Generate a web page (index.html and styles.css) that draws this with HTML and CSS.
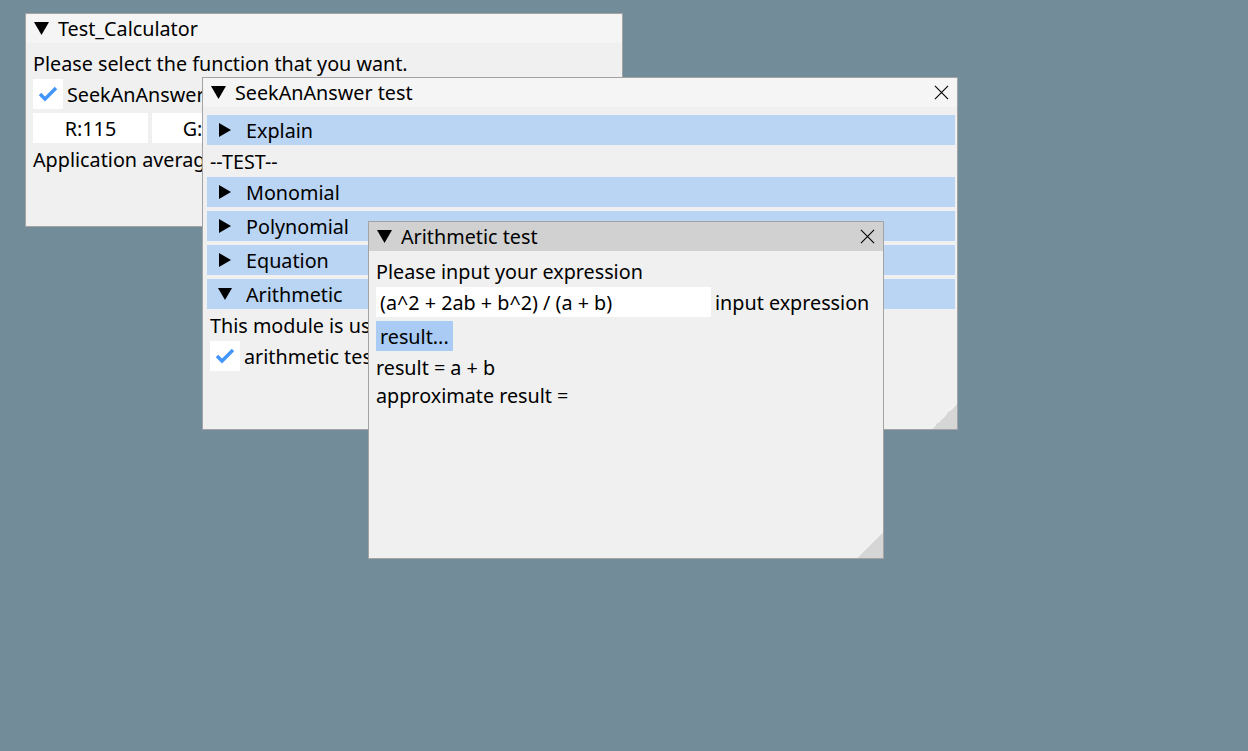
FILE: index.html
```html
<!DOCTYPE html>
<html>
<head>
<meta charset="utf-8">
<link rel="stylesheet" href="styles.css">
</head>
<body>
<div class="desk">

  <div class="win win1">
    <div class="title">
      <svg class="tri" viewBox="0 0 14 14"><polygon points="0,1 14,1 7,13" /></svg>
      <span>Test_Calculator</span>
    </div>
    <div class="content">
      <div class="line">Please select the function that you want.</div>
      <div class="check-row">
        <span class="box"><svg viewBox="0 0 30 30"><polyline points="7,15 12,20 23,9" /></svg></span>
        <span class="label">SeekAnAnswer test</span>
      </div>
      <div class="color-row">
        <span class="cfield">R:115</span>
        <span class="cfield">G:140</span>
        <span class="cfield">B:153</span>
        <span class="swatch"></span>
        <span class="label">clear color</span>
      </div>
      <div class="line">Application average 16.667 ms/frame (60.0 FPS)</div>
    </div>
  </div>

  <div class="win win2">
    <div class="title">
      <svg class="tri" viewBox="0 0 14 14"><polygon points="0,1 14,1 7,13" /></svg>
      <span>SeekAnAnswer test</span>
      <svg class="close" viewBox="0 0 16 16"><path d="M1 1 L15 15 M15 1 L1 15" /></svg>
    </div>
    <div class="content">
      <div class="header"><svg class="arrow" viewBox="0 0 14 14"><polygon points="1,0 13,7 1,14" /></svg><span>Explain</span></div>
      <div class="line">--TEST--</div>
      <div class="header"><svg class="arrow" viewBox="0 0 14 14"><polygon points="1,0 13,7 1,14" /></svg><span>Monomial</span></div>
      <div class="header"><svg class="arrow" viewBox="0 0 14 14"><polygon points="1,0 13,7 1,14" /></svg><span>Polynomial</span></div>
      <div class="header"><svg class="arrow" viewBox="0 0 14 14"><polygon points="1,0 13,7 1,14" /></svg><span>Equation</span></div>
      <div class="header"><svg class="arrow" viewBox="0 0 14 14"><polygon points="0,1 14,1 7,13" /></svg><span>Arithmetic</span></div>
      <div class="line">This module is used for arithmetic expressions.</div>
      <div class="check-row">
        <span class="box"><svg viewBox="0 0 30 30"><polyline points="7,15 12,20 23,9" /></svg></span>
        <span class="label">arithmetic test</span>
      </div>
    </div>
    <div class="grip"></div>
  </div>

  <div class="win win3 active">
    <div class="title">
      <svg class="tri" viewBox="0 0 14 14"><polygon points="0,1 14,1 7,13" /></svg>
      <span>Arithmetic test</span>
      <svg class="close" viewBox="0 0 16 16"><path d="M1 1 L15 15 M15 1 L1 15" /></svg>
    </div>
    <div class="content">
      <div class="line">Please input your expression</div>
      <div class="input-row">
        <span class="input">(a^2 + 2ab + b^2) / (a + b)</span>
        <span class="label">input expression</span>
      </div>
      <div class="btn-row"><span class="btn">result...</span></div>
      <div class="line">result = a + b</div>
      <div class="line">approximate result =</div>
    </div>
    <div class="grip"></div>
  </div>

</div>
</body>
</html>
```

FILE: styles.css
```css
html, body {
  margin: 0;
  padding: 0;
}
body {
  background: #738c99;
  width: 1248px;
  height: 751px;
  overflow: hidden;
  font-family: "Noto Sans", "Open Sans", sans-serif;
  font-size: 19.75px;
  color: #000;
}
.desk {
  position: relative;
  width: 1248px;
  height: 751px;
}
.win {
  position: absolute;
  box-sizing: border-box;
  background: #f0f0f0;
  border: 1px solid #a3a3a3;
  overflow: hidden;
  display: flex;
  flex-direction: column;
}
.win1 { left: 25px; top: 13px; width: 598px; height: 214px; }
.win2 { left: 202px; top: 77px; width: 756px; height: 353px; }
.win3 { left: 368px; top: 221px; width: 516px; height: 338px; }

.title {
  height: 29px;
  flex: none;
  background: #f5f5f5;
  display: flex;
  align-items: center;
  padding-left: 8px;
  line-height: 24px;
  position: relative;
}
.active .title {
  background: #d1d1d1;
}
.tri {
  width: 15px;
  height: 15px;
  fill: #000;
  margin-right: 9px;
}
.close {
  position: absolute;
  right: 8px;
  top: 7px;
  width: 15px;
  height: 15px;
  stroke: #000;
  stroke-width: 1.2;
  fill: none;
}
.content {
  padding: 8px 7px;
  display: flex;
  flex-direction: column;
  gap: 4px;
  line-height: 24px;
  white-space: nowrap;
}
.line {
  box-sizing: border-box;
  height: 24px;
  padding-top: 2px;
  line-height: 22px;
}
.check-row, .color-row, .input-row, .btn-row {
  display: flex;
  gap: 4px;
  align-items: center;
  height: 30px;
}
.label {
  padding-top: 2px;
}
.box {
  width: 30px;
  height: 30px;
  background: #fff;
  flex: none;
}
.box svg {
  width: 30px;
  height: 30px;
  fill: none;
  stroke: #4296fa;
  stroke-width: 3.4;
}
.cfield {
  box-sizing: border-box;
  width: 115px;
  height: 30px;
  background: #fff;
  text-align: center;
  padding-top: 2px;
  line-height: 28px;
  flex: none;
}
.swatch {
  width: 30px;
  height: 30px;
  background: #738c99;
  flex: none;
}
.header {
  box-sizing: border-box;
  height: 30px;
  background: #bad4f3;
  margin: 0 -5px 0 -3px;
  display: flex;
  align-items: center;
  padding-left: 11px;
  padding-top: 2px;
}
.arrow {
  width: 14px;
  height: 14px;
  fill: #000;
  margin-right: 14px;
  margin-top: -2px;
}
.input {
  box-sizing: border-box;
  width: 335px;
  height: 30px;
  background: #fff;
  padding-left: 4px;
  padding-top: 2px;
  line-height: 28px;
  flex: none;
}
.btn {
  box-sizing: border-box;
  background: #aaccf4;
  height: 30px;
  padding: 2px 4px 0;
  line-height: 28px;
}
.grip {
  position: absolute;
  right: 0;
  bottom: 0;
  width: 25px;
  height: 25px;
  background: linear-gradient(to bottom right, transparent 50%, #d6d6d6 50%);
}
```
